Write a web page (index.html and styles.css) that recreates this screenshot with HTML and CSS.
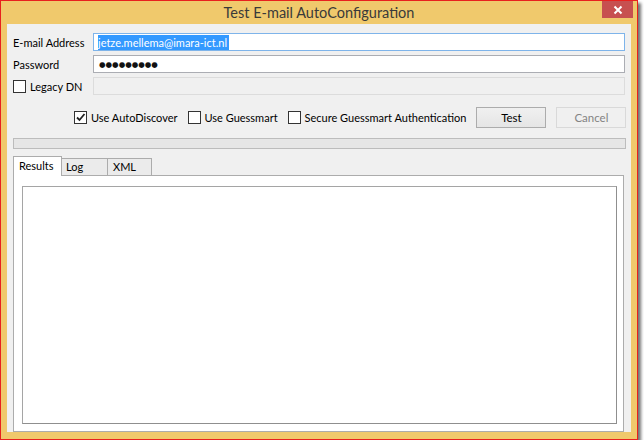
FILE: index.html
```html
<!DOCTYPE html>
<html lang="en">
<head>
  <meta charset="UTF-8">
  <title>Test E-mail AutoConfiguration</title>
  <link rel="stylesheet" href="styles.css">
</head>
<body>
  <div class="window">
    <div class="titlebar">
      <span class="title">Test E-mail AutoConfiguration</span>
      <div class="close">
        <svg width="10" height="10" viewBox="0 0 10 10">
          <path d="M1.5 1.5L8.5 8.5M8.5 1.5L1.5 8.5" stroke="#fff" stroke-width="2" fill="none"/>
        </svg>
      </div>
    </div>

    <div class="client">
      <div class="form-grid">
        <label class="label">E-mail Address</label>
        <div class="field focused"><span class="selection">jetze.mellema@imara-ict.nl</span></div>

        <label class="label">Password</label>
        <div class="field"><span class="dots">●●●●●●●●●</span></div>

        <label class="label check"><span class="box"></span>Legacy DN</label>
        <div class="field disabled"></div>
      </div>

      <div class="options">
        <label class="check"><span class="box">
          <svg width="11" height="11" viewBox="0 0 11 11"><path d="M2 5.5L4.5 8L9.5 2" stroke="#222" stroke-width="1.8" fill="none"/></svg>
        </span>Use AutoDiscover</label>
        <label class="check"><span class="box"></span>Use Guessmart</label>
        <label class="check"><span class="box"></span>Secure Guessmart Authentication</label>
        <button class="button test">Test</button>
        <button class="button" disabled>Cancel</button>
      </div>

      <div class="progress"></div>

      <div class="tabs">
        <div class="tab active">Results</div>
        <div class="tab">Log</div>
        <div class="tab">XML</div>
      </div>
      <div class="tab-panel">
        <div class="results"></div>
      </div>
    </div>
  </div>
</body>
</html>
```

FILE: styles.css
```css
body {
  margin: 0;
  background: #fff;
  font-family: Lato, "Noto Sans", sans-serif;
  font-size: 11px;
  color: #000;
}

.window {
  width: 624px;
  height: 431px;
  padding: 0 6px 7px 6px;
  background: #f0c96c;
  border: 1px solid #e8211e;
  box-shadow: 3px 3px 3px rgba(0, 0, 0, 0.55);
  display: flex;
  flex-direction: column;
}

.titlebar {
  height: 25px;
  position: relative;
  display: flex;
  align-items: center;
  justify-content: center;
}

.title {
  font-size: 14.5px;
  color: #3a3a3a;
  margin-top: -1px;
}

.close {
  position: absolute;
  right: -2px;
  top: 0;
  width: 31px;
  height: 17px;
  background: #c75050;
  display: flex;
  align-items: center;
  justify-content: center;
}

.client {
  flex: 1;
  background: #f0f0f0;
  padding: 9px 6px 0 6px;
  display: flex;
  flex-direction: column;
}

.form-grid {
  display: grid;
  grid-template-columns: 80px 1fr;
  row-gap: 4px;
  align-items: center;
}

.label {
  display: flex;
  align-items: center;
  white-space: nowrap;
}

.field {
  height: 16px;
  border: 1px solid #abadb3;
  background: #fff;
  display: flex;
  align-items: center;
  padding: 0 4px;
}

.field.focused {
  border-color: #7eb4ea;
}

.field.disabled {
  background: #f0f0f0;
  border-color: #dcdcdc;
}

.selection {
  background: #3399ff;
  color: #fff;
  line-height: 15px;
  padding: 0 2px 0 0;
}

.dots {
  font-family: "DejaVu Sans", sans-serif;
  font-size: 7.5px;
  color: #111;
  padding-left: 1px;
}

.check {
  display: flex;
  align-items: center;
  white-space: nowrap;
}

.box {
  width: 11px;
  height: 11px;
  border: 1px solid #333;
  background: #fff;
  margin-right: 4px;
  display: flex;
  align-items: center;
  justify-content: center;
}

.options {
  display: flex;
  align-items: center;
  margin-top: 12px;
  padding-left: 61px;
}

.options .check {
  margin-right: 10px;
}

.button {
  flex-shrink: 0;
  width: 70px;
  height: 21px;
  margin-right: 10px;
  font-family: inherit;
  font-size: 11.5px;
  color: #000;
  background: linear-gradient(#f0f0f0, #e5e5e5);
  border: 1px solid #acacac;
  padding: 0;
}

.button.test {
  margin-left: auto;
}

.button:last-child {
  margin-right: 0;
}

.button:disabled {
  color: #838383;
  background: #f0f0f0;
  border-color: #d9d9d9;
}

.progress {
  height: 9px;
  margin-top: 10px;
  margin-right: -1px;
  border: 1px solid #bcbcbc;
  background: #e6e6e6;
}

.tabs {
  display: flex;
  align-items: flex-end;
  margin-top: 7px;
  height: 19px;
  padding-left: 1px;
}

.tab {
  height: 16px;
  width: 41px;
  padding-left: 4px;
  border: 1px solid #acacac;
  border-bottom: none;
  background: #ebebeb;
  margin-left: -1px;
  line-height: 16px;
}

.tab.active {
  height: 19px;
  width: 42px;
  padding-left: 5px;
  background: #fff;
  position: relative;
  z-index: 1;
  margin-bottom: -1px;
  line-height: 17px;
}

.tab:nth-child(3) {
  width: 38px;
  padding-left: 5px;
}

.tab-panel {
  height: 238px;
  margin-right: 1px;
  border: 1px solid #acacac;
  background: #fff;
  padding: 10px 6px 7px 8px;
}

.results {
  height: 100%;
  box-sizing: border-box;
  border: 1px solid #a5a5a5;
  border-right-color: #8f8f8f;
  border-bottom-color: #8f8f8f;
  background: #fff;
}
```
